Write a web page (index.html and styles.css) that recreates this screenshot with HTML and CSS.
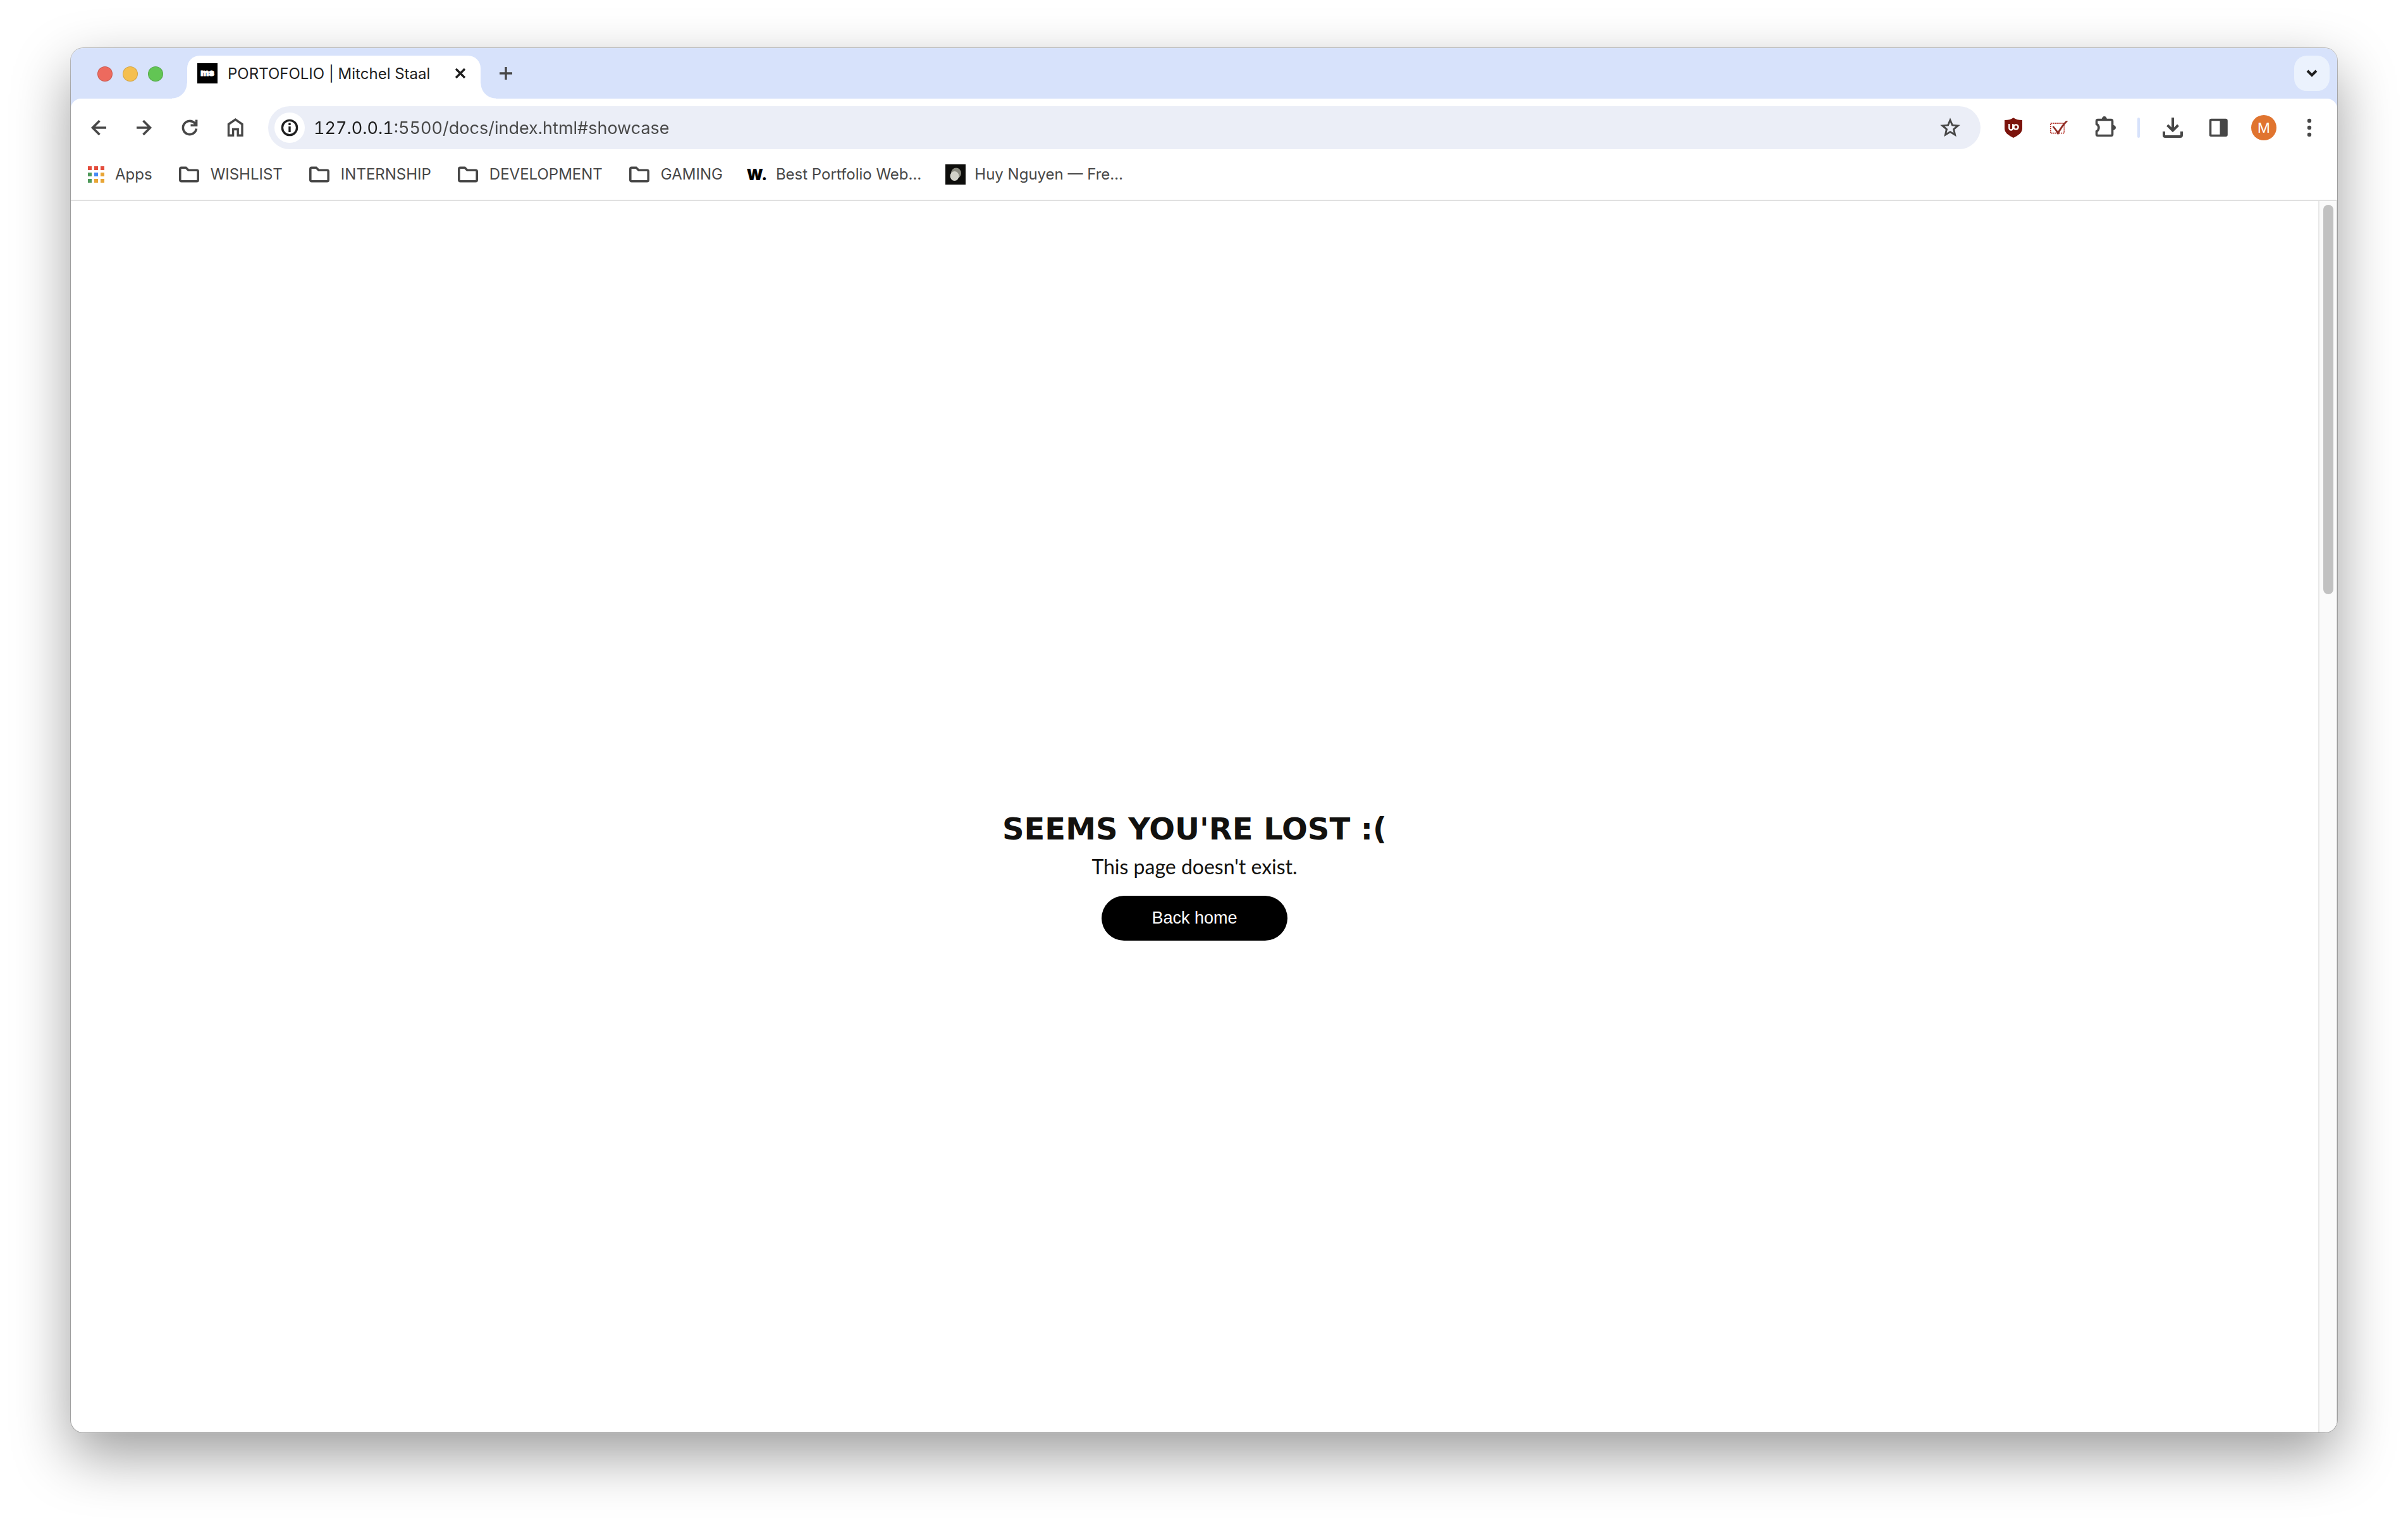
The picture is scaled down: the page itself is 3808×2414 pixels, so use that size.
FILE: index.html
```html
<!DOCTYPE html>
<html lang="en">
<head>
<meta charset="utf-8">
<title>PORTOFOLIO | Mitchel Staal</title>
<link rel="stylesheet" href="styles.css">
</head>
<body>
<div class="window">
  <header class="chrome">
    <div class="tab-strip">
      <div class="traffic">
        <button class="light light-red" aria-label="Close window"></button>
        <button class="light light-yellow" aria-label="Minimise window"></button>
        <button class="light light-green" aria-label="Zoom window"></button>
      </div>
      <div class="tab">
        <svg class="favicon" viewBox="0 0 32 32" aria-hidden="true">
          <rect width="32" height="32" fill="#000"/>
          <text x="16" y="20" text-anchor="middle" class="ms-mark">ms</text>
        </svg>
        <span class="tab-title">PORTOFOLIO | Mitchel Staal</span>
        <button class="strip-button" aria-label="Close tab">
          <svg class="icon" viewBox="0 0 48 48"><path d="M17 17l14 14M31 17L17 31" stroke="#1f1f1f" stroke-width="3.4"/></svg>
        </button>
      </div>
      <button class="strip-button new-tab" aria-label="New tab">
        <svg class="icon" viewBox="0 0 48 48"><path d="M24 14v20M14 24h20" stroke-width="3.4"/></svg>
      </button>
      <button class="tab-search" aria-label="Search tabs">
        <svg class="icon" viewBox="0 0 48 48"><path d="M17 20l7 7 7-7" stroke="#1f1f1f" stroke-width="4"/></svg>
      </button>
    </div>

    <div class="toolbar">
      <nav class="tools" aria-label="Navigation">
        <button class="tool" aria-label="Back"><svg class="icon" viewBox="0 0 48 48"><path d="M36 24H15M25.500 13L14.500 24l11 11"/></svg></button>
        <button class="tool" aria-label="Forward"><svg class="icon" viewBox="0 0 48 48"><path d="M12 24h21M22.500 13l11 11-11 11"/></svg></button>
        <button class="tool" aria-label="Reload"><svg class="icon" viewBox="0 0 48 48"><path d="M34.500 25.500A10.600 10.600 0 1 1 31.500 16.500L34 19M34.600 11.500v8.700H25.500"/></svg></button>
        <button class="tool" aria-label="Home"><svg class="icon" viewBox="0 0 48 48"><path d="M13.500 36.200V18.500L24.300 11l10.700 7.500v17.700h-6.800v-9.700h-7.600v9.700z" stroke-width="3.400"/></svg></button>
      </nav>
      <form class="omnibox">
        <button type="button" class="site-info" aria-label="View site information">
          <svg class="icon" viewBox="0 0 48 48"><g stroke="#1f1f1f" stroke-width="3.4"><circle cx="24" cy="24" r="11.600"/><path d="M24 22v9M24 16.500v3.400"/></g></svg>
        </button>
        <input class="address" type="text" aria-label="Address" value="127.0.0.1:5500/docs/index.html#showcase">
        <button type="button" class="bookmark-star" aria-label="Bookmark this tab">
          <svg class="star" viewBox="0 0 24 24"><path d="M22 9.240l-7.190-.620L12 2 9.190 8.630 2 9.240l5.460 4.730L5.820 21 12 17.270 18.180 21l-1.630-7.030L22 9.240zM12 15.100l-3.400 2.100.9-3.950-3-2.600 4-.35L12 6.600l1.500 3.700 4 .35-3 2.600.9 3.950L12 15.100z"/></svg>
        </button>
      </form>
      <div class="tools">
        <button class="tool" aria-label="uBlock Origin">
          <svg class="icon" viewBox="0 0 48 48">
            <path d="M24 8.200C28 11 32 12 38 12v13c0 7-6 11-14 15C16 36 10 32 10 25V12c6 0 10-1 14-3.800z" fill="#7b130c" stroke="none"/>
            <path d="M17.300 18v6.500a3 3 0 0 0 6 0V18" stroke="#fff" stroke-width="2.400"/>
            <circle cx="28" cy="23" r="3.600" stroke="#fff" stroke-width="2.400"/>
          </svg>
        </button>
        <button class="tool" aria-label="Task checker">
          <svg class="icon" viewBox="0 0 48 48">
            <path d="M10.800 17h21.500v15.600H10.800z" stroke="#b5352c" stroke-width="1.800" stroke-dasharray="2 1.100"/>
            <path d="M13.500 22.800l2.200-1.500 6.800 8.500c4-6.600 8-12.500 12.500-16.500H38.500C32 19.500 27 27 22.500 35.800 20 31 17 26.500 13.500 22.800z" fill="#8f2a22" stroke="none"/>
          </svg>
        </button>
        <button class="tool" aria-label="Extensions">
          <svg class="icon" viewBox="0 0 48 48">
            <path d="M13.500 11.500h21a2 2 0 0 1 2 2v21a2 2 0 0 1-2 2h-21a2 2 0 0 1-2-2v-4.600a6.800 6.800 0 0 0 0-11.800v-4.600a2 2 0 0 1 2-2z"/>
            <path d="M19.700 11a4.100 5 0 0 1 8.200 0zM37 19.800a5 4.100 0 0 1 0 8.200z" fill="#474747" stroke="none"/>
          </svg>
        </button>
        <span class="divider"></span>
        <button class="tool" aria-label="Downloads"><svg class="icon" viewBox="0 0 48 48"><path d="M24 8v20M15.500 20l8.500 8.500 8.500-8.500M10 30v6a2 2 0 0 0 2 2h24a2 2 0 0 0 2-2v-6" stroke-width="4"/></svg></button>
        <button class="tool" aria-label="Side panel"><svg class="icon" viewBox="0 0 48 48"><rect x="11.500" y="11.500" width="25.500" height="25" rx="1.500"/><path d="M26.500 11h11v26h-11z" fill="#474747" stroke="none"/></svg></button>
        <button class="tool" aria-label="Profile"><span class="avatar">M</span></button>
        <button class="tool" aria-label="Menu"><svg class="icon" viewBox="0 0 48 48"><g fill="#474747" stroke="none"><circle cx="24" cy="13" r="3.200"/><circle cx="24" cy="24" r="3.200"/><circle cx="24" cy="35" r="3.200"/></g></svg></button>
      </div>
    </div>

    <nav class="bookmarks" aria-label="Bookmarks">
      <a class="bookmark" href="#apps">
        <svg class="mark" viewBox="0 0 32 32">
          <path d="M3 3h6v6H3zM13 3h6v6h-6zM23 3h6v6h-6z" fill="#e34c3c"/>
          <path d="M3 13h6v6H3zM3 23h6v6H3z" fill="#4f9a5b"/>
          <path d="M13 13h6v6h-6z" fill="#448af6"/>
          <path d="M23 13h6v6h-6zM13 23h6v6h-6zM23 23h6v6h-6z" fill="#e8a535"/>
        </svg>Apps</a>
      <a class="bookmark" href="#wishlist"><svg class="folder" viewBox="0 0 40 40"><path d="M7.800 9.300H15l4 4h13.200a2 2 0 0 1 2 2v13.400a2 2 0 0 1-2 2H7.800a2 2 0 0 1-2-2V11.300a2 2 0 0 1 2-2z"/></svg>WISHLIST</a>
      <a class="bookmark" href="#internship"><svg class="folder" viewBox="0 0 40 40"><path d="M7.800 9.300H15l4 4h13.200a2 2 0 0 1 2 2v13.400a2 2 0 0 1-2 2H7.800a2 2 0 0 1-2-2V11.300a2 2 0 0 1 2-2z"/></svg>INTERNSHIP</a>
      <a class="bookmark" href="#development"><svg class="folder" viewBox="0 0 40 40"><path d="M7.800 9.300H15l4 4h13.200a2 2 0 0 1 2 2v13.400a2 2 0 0 1-2 2H7.800a2 2 0 0 1-2-2V11.300a2 2 0 0 1 2-2z"/></svg>DEVELOPMENT</a>
      <a class="bookmark" href="#gaming"><svg class="folder" viewBox="0 0 40 40"><path d="M7.800 9.300H15l4 4h13.200a2 2 0 0 1 2 2v13.400a2 2 0 0 1-2 2H7.800a2 2 0 0 1-2-2V11.300a2 2 0 0 1 2-2z"/></svg>GAMING</a>
      <a class="bookmark" href="#portfolios"><svg class="mark" viewBox="0 0 32 32"><text x="16" y="25" text-anchor="middle" class="w-mark">W.</text></svg>Best Portfolio Web…</a>
      <a class="bookmark" href="#huy">
        <svg class="mark" viewBox="0 0 32 32">
          <rect width="32" height="32" fill="#0d0d0b"/>
          <ellipse cx="17" cy="14" rx="8" ry="8.500" fill="#8b8b80"/>
          <ellipse cx="14.500" cy="18.500" rx="7" ry="7.500" fill="#d2d2c8"/>
        </svg>Huy Nguyen — Fre…</a>
    </nav>
  </header>

  <div class="viewport">
    <main class="page">
      <h1 class="page-title">SEEMS YOU'RE LOST :(</h1>
      <p class="page-text">This page doesn't exist.</p>
      <button class="home-button">Back home</button>
    </main>
    <div class="scrollbar"><div class="thumb"></div></div>
  </div>
</div>
</body>
</html>
```
FILE: styles.css
```css
:root {
  --ink: #1f1f1f;
  --grey: #474747;
  --strip: #d7e2fb;
}

* { box-sizing: border-box; }

body {
  margin: 0;
  min-height: 100vh;
  padding: 76px 112px 148px;
  display: flex;
  background: #fff;
  color: var(--grey);
  font-family: Inter, "Liberation Sans", sans-serif;
  font-size: 24px;
}

button {
  margin: 0;
  padding: 0;
  border: 0;
  background: none;
  color: inherit;
  font: inherit;
}

.window {
  flex: 1;
  display: flex;
  flex-direction: column;
  overflow: hidden;
  border-radius: 20px;
  background: #fff;
  box-shadow: 0 0 0 1px rgba(0, 0, 0, 0.24), 0 36px 90px rgba(0, 0, 0, 0.39);
}

.chrome { background: var(--strip); }

.icon {
  display: block;
  width: 48px;
  height: 48px;
  fill: none;
  stroke: var(--grey);
  stroke-width: 3.6;
}

/* Tab strip */
.tab-strip {
  display: flex;
  align-items: flex-start;
  height: 80px;
  padding: 12px 12px 0 42px;
}

.traffic {
  display: flex;
  align-items: center;
  gap: 16px;
  height: 58px;
  margin-right: 38px;
}

.light {
  width: 24px;
  height: 24px;
  border: 1px solid rgba(0, 0, 0, 0.14);
  border-radius: 50%;
}

.light-red { background: #ed6a5e; }
.light-yellow { background: #f5bf4f; }
.light-green { background: #62c554; }

.tab {
  position: relative;
  display: flex;
  align-items: center;
  width: 464px;
  height: 68px;
  padding: 0 8px 12px 16px;
  border-radius: 20px 20px 0 0;
  background: #fff;
}

.tab::before,
.tab::after {
  content: "";
  position: absolute;
  bottom: 0;
  width: 24px;
  height: 24px;
}

.tab::before {
  right: 100%;
  background: radial-gradient(circle at 0 0, transparent 23px, #fff 24px);
}

.tab::after {
  left: 100%;
  background: radial-gradient(circle at 100% 0, transparent 23px, #fff 24px);
}

.favicon {
  width: 32px;
  height: 32px;
  margin-right: 16px;
}

.ms-mark {
  fill: #fff;
  stroke: #fff;
  stroke-width: 1px;
  font: 900 14px Inter, sans-serif;
}

.tab-title {
  flex: 1;
  color: var(--ink);
  white-space: nowrap;
}

.strip-button {
  width: 48px;
  height: 56px;
  display: grid;
  place-items: center;
}

.new-tab { margin-left: 16px; }

.tab-search {
  display: grid;
  place-items: center;
  width: 56px;
  height: 56px;
  margin-left: auto;
  border-radius: 20px;
  background: #ebf2fd;
}

/* Toolbar */
.toolbar {
  display: flex;
  align-items: center;
  gap: 16px;
  padding: 12px 8px 0;
  border-radius: 16px 16px 0 0;
  background: #fff;
}

.tools {
  display: flex;
  align-items: center;
}

.tool {
  display: grid;
  place-items: center;
  width: 72px;
  height: 48px;
}

.omnibox {
  flex: 1;
  display: flex;
  align-items: center;
  height: 68px;
  padding: 0 24px 0 10px;
  border-radius: 34px;
  background: #ebeef7;
}

.site-info {
  width: 48px;
  height: 48px;
  margin-right: 14px;
  border-radius: 50%;
  background: #fff;
}

/* The host part of the address is darker than the path */
.address {
  flex: 1;
  min-width: 0;
  height: 48px;
  padding: 0;
  border: 0;
  outline: 0;
  color: transparent;
  background: linear-gradient(90deg, var(--ink) 120px, var(--grey) 120px) text;
  font: 27px Inter, "Liberation Sans", sans-serif;
  font-variant-numeric: tabular-nums;
}

.bookmark-star {
  display: grid;
  place-items: center;
  width: 48px;
  height: 48px;
}

.star {
  width: 38px;
  height: 38px;
  fill: var(--grey);
}

.divider {
  width: 4px;
  height: 32px;
  margin: 0 16px;
  border-radius: 2px;
  background: var(--strip);
}

.avatar {
  width: 40px;
  height: 40px;
  border-radius: 50%;
  background: #e0742f;
  color: #fff;
  font-size: 22px;
  line-height: 40px;
  text-align: center;
}

/* Bookmarks bar */
.bookmarks {
  display: flex;
  align-items: center;
  gap: 38px;
  height: 82px;
  padding: 0 24px;
  border-bottom: 2px solid #e0e0e0;
  background: #fff;
}

.bookmark {
  display: flex;
  align-items: center;
  gap: 14px;
  color: inherit;
  line-height: 28px;
  text-decoration: none;
  white-space: nowrap;
}

.mark {
  width: 32px;
  height: 32px;
}

.folder {
  width: 40px;
  height: 40px;
  fill: none;
  stroke: var(--grey);
  stroke-width: 3.6;
}

.w-mark {
  fill: #000;
  font: 900 24px Inter, sans-serif;
}

/* Page */
.viewport {
  flex: 1;
  display: flex;
}

.page {
  flex: 1;
  display: flex;
  flex-direction: column;
  align-items: center;
}

.page::before { content: ""; flex: 31; }
.page::after { content: ""; flex: 25; }

.page-title {
  margin: 0 0 8px;
  color: #12110f;
  font: 700 48px/56px "DejaVu Sans", sans-serif;
}

.page-text {
  margin: 0 0 22px;
  color: #12110f;
  font: 32px/48px Lato, sans-serif;
}

.home-button {
  width: 294px;
  height: 71px;
  border-radius: 36px;
  background: #000;
  color: #fff;
  font: 27px "Liberation Sans", sans-serif;
}

.scrollbar {
  width: 30px;
  padding: 6px;
  border: solid #e8e8e8;
  border-width: 0 2px;
  background: #fafafa;
}

.thumb {
  width: 16px;
  height: 31.8%;
  border-radius: 8px;
  background: #c1c1c1;
}
```
